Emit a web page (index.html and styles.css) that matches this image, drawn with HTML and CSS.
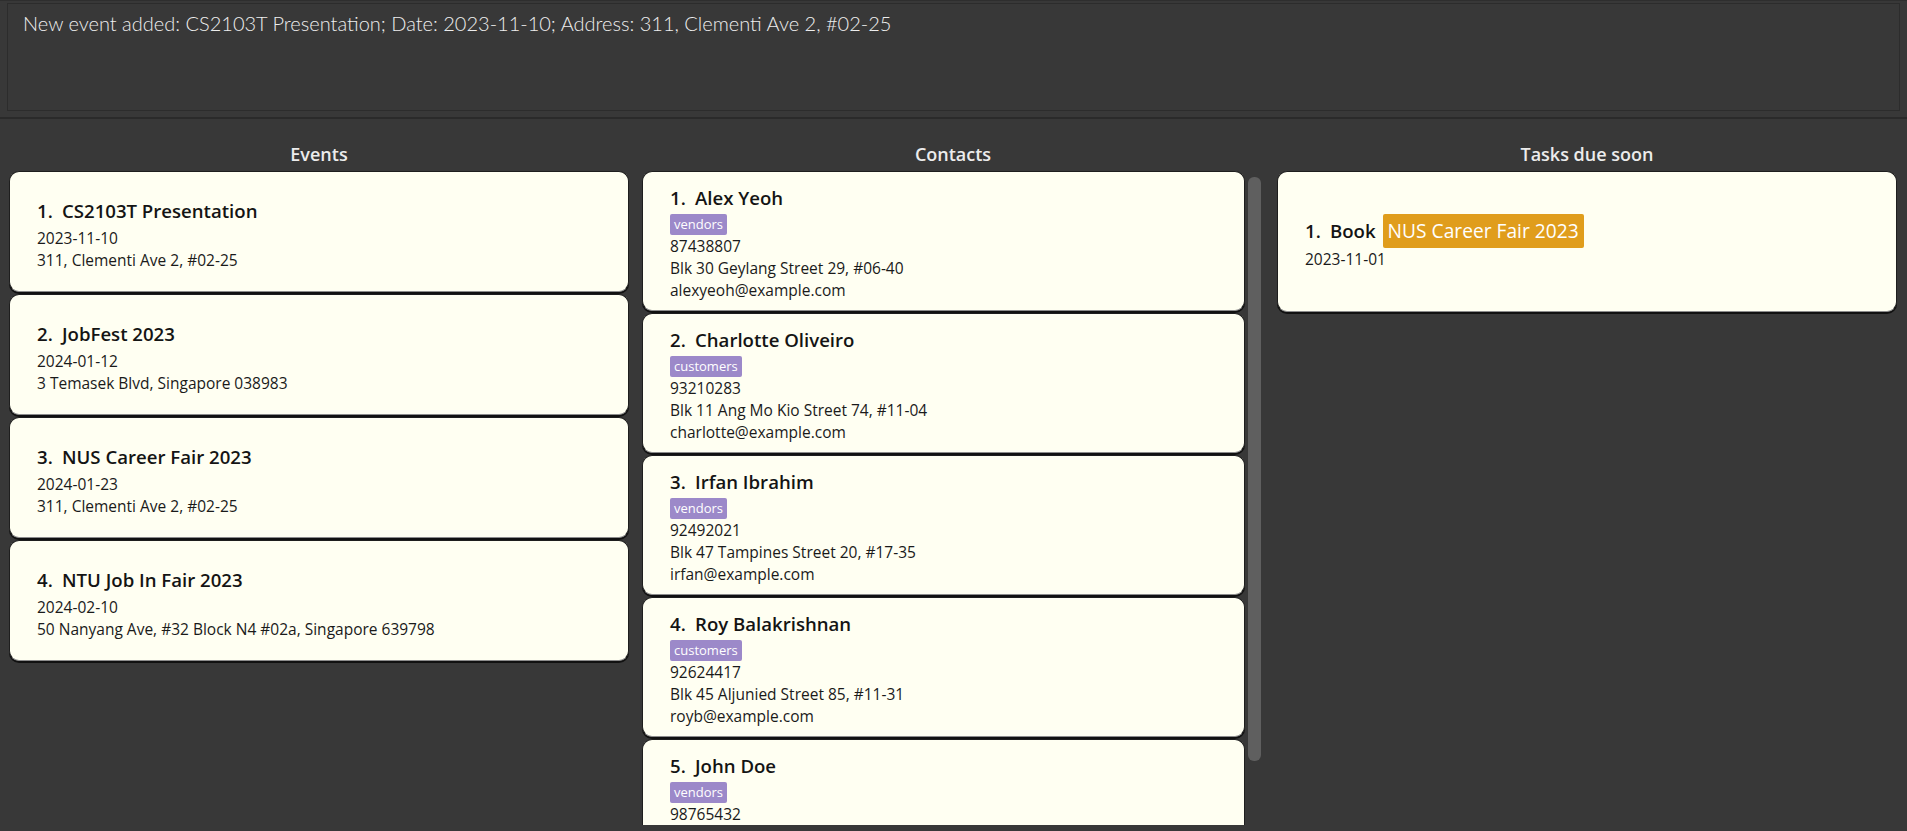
FILE: index.html
```html
<!DOCTYPE html>
<html lang="en">
<head>
<meta charset="utf-8">
<title>Event Planner</title>
<link rel="stylesheet" href="styles.css">
</head>
<body>
<div class="app">
  <header class="result-pane">
    <div class="result-box">New event added: CS2103T Presentation; Date: 2023-11-10; Address: 311, Clementi Ave 2, #02-25</div>
  </header>
  <main class="lists">
    <section class="col">
      <h2 class="col-title">Events</h2>
      <div class="list">
        <article class="card event-card">
          <div class="title"><span class="idx">1.</span><span class="name">CS2103T Presentation</span></div>
          <div class="line">2023-11-10</div>
          <div class="line">311, Clementi Ave 2, #02-25</div>
        </article>
        <article class="card event-card">
          <div class="title"><span class="idx">2.</span><span class="name">JobFest 2023</span></div>
          <div class="line">2024-01-12</div>
          <div class="line">3 Temasek Blvd, Singapore 038983</div>
        </article>
        <article class="card event-card">
          <div class="title"><span class="idx">3.</span><span class="name">NUS Career Fair 2023</span></div>
          <div class="line">2024-01-23</div>
          <div class="line">311, Clementi Ave 2, #02-25</div>
        </article>
        <article class="card event-card">
          <div class="title"><span class="idx">4.</span><span class="name">NTU Job In Fair 2023</span></div>
          <div class="line">2024-02-10</div>
          <div class="line">50 Nanyang Ave, #32 Block N4 #02a, Singapore 639798</div>
        </article>
      </div>
    </section>
    <section class="col">
      <h2 class="col-title">Contacts</h2>
      <div class="scroll-wrap">
        <div class="list contact-list">
          <article class="card contact-card">
            <div class="title"><span class="idx">1.</span><span class="name">Alex Yeoh</span></div>
            <div class="tags"><span class="tag">vendors</span></div>
            <div class="line">87438807</div>
            <div class="line">Blk 30 Geylang Street 29, #06-40</div>
            <div class="line">alexyeoh@example.com</div>
          </article>
          <article class="card contact-card">
            <div class="title"><span class="idx">2.</span><span class="name">Charlotte Oliveiro</span></div>
            <div class="tags"><span class="tag">customers</span></div>
            <div class="line">93210283</div>
            <div class="line">Blk 11 Ang Mo Kio Street 74, #11-04</div>
            <div class="line">charlotte@example.com</div>
          </article>
          <article class="card contact-card">
            <div class="title"><span class="idx">3.</span><span class="name">Irfan Ibrahim</span></div>
            <div class="tags"><span class="tag">vendors</span></div>
            <div class="line">92492021</div>
            <div class="line">Blk 47 Tampines Street 20, #17-35</div>
            <div class="line">irfan@example.com</div>
          </article>
          <article class="card contact-card">
            <div class="title"><span class="idx">4.</span><span class="name">Roy Balakrishnan</span></div>
            <div class="tags"><span class="tag">customers</span></div>
            <div class="line">92624417</div>
            <div class="line">Blk 45 Aljunied Street 85, #11-31</div>
            <div class="line">royb@example.com</div>
          </article>
          <article class="card contact-card">
            <div class="title"><span class="idx">5.</span><span class="name">John Doe</span></div>
            <div class="tags"><span class="tag">vendors</span></div>
            <div class="line">98765432</div>
          </article>
        </div>
        <div class="scrollbar"><div class="thumb"></div></div>
      </div>
    </section>
    <section class="col">
      <h2 class="col-title">Tasks due soon</h2>
      <div class="list">
        <article class="card task-card">
          <div class="title task-title"><span class="idx">1.</span><span class="name">Book</span><span class="event-tag">NUS Career Fair 2023</span></div>
          <div class="line">2023-11-01</div>
        </article>
      </div>
    </section>
  </main>
</div>
</body>
</html>
```
FILE: styles.css
```css
* { box-sizing: border-box; }
html, body { margin: 0; padding: 0; }
body {
  width: 1907px;
  height: 831px;
  overflow: hidden;
  background: #383838;
  font-family: "Open Sans", "Noto Sans", sans-serif;
  color: #1a1a1a;
}
.app { display: flex; flex-direction: column; height: 831px; }

.result-pane {
  padding: 2px 7px 6px 7px;
  border-bottom: 2px solid #2a2a2a;
  border-top: 1px solid #2e2e2e;
}
.result-box {
  height: 108px;
  border: 1px solid #2c2c2c;
  padding: 5px 15px 0 15px;
  font-family: "Lato", "Open Sans", sans-serif;
  font-weight: 300;
  font-size: 20px;
  line-height: 28px;
  color: #eeeeee;
  white-space: nowrap;
}

.lists {
  display: grid;
  grid-template-columns: 620px 622px 620px;
  column-gap: 13px;
  padding-left: 9px;
}
.col { display: flex; flex-direction: column; min-width: 0; }
.col-title {
  margin: 0;
  padding: 23px 0 5px 0;
  line-height: 24px;
  font-size: 18px;
  font-weight: 600;
  color: #ececec;
  text-align: center;
}
.list {
  height: 654px;
  overflow: hidden;
  display: flex;
  flex-direction: column;
  gap: 2px;
}
.scroll-wrap { display: flex; gap: 3px; height: 654px; }
.contact-list { flex: 0 0 603px; }
.scrollbar { flex: 0 0 13px; padding-top: 6px; }
.thumb { height: 584px; background: #5f5f5f; border-radius: 6px; }

.card {
  flex: 0 0 auto;
  background: #fffff2;
  border: 1px solid #1e1e1e;
  border-bottom-color: #8c8c8c;
  border-radius: 10px;
  box-shadow: 0 2px 0 #111111;
  padding-left: 27px;
}
.title {
  display: flex;
  align-items: center;
  font-size: 18.6px;
  font-weight: 600;
  line-height: 26px;
  color: #141414;
}
.idx { width: 25px; flex: 0 0 25px; }
.line { font-size: 15.5px; line-height: 22px; color: #1a1a1a; white-space: nowrap; }

.event-card { height: 121px; padding-top: 26px; }
.event-card .title { margin-bottom: 3px; }

.contact-card { height: 140px; padding-top: 13px; }
.tags { display: flex; margin-top: 3px; }
.tag {
  background: #9c89c9;
  color: #ffffff;
  font-size: 13px;
  line-height: 19px;
  padding: 1px 4px;
  border-radius: 2px;
}

.task-card {
  height: 141px;
  display: flex;
  flex-direction: column;
  justify-content: center;
}
.task-title { height: 34px; }
.event-tag {
  margin-left: 7px;
  background: #e09d1c;
  color: #ffffff;
  font-size: 19.2px;
  font-weight: 400;
  line-height: 26px;
  padding: 4px 5px;
  border-radius: 2px;
}
```
